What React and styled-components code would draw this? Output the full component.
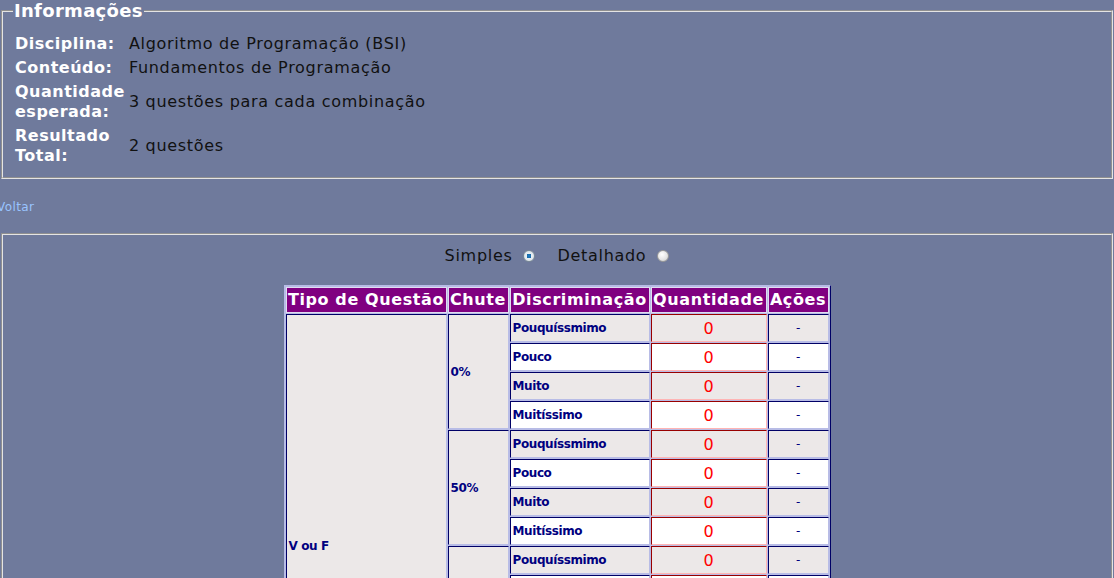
import React, { useState } from 'react';
import styled, { createGlobalStyle } from 'styled-components';

const GlobalStyle = createGlobalStyle`
  body {
    margin: 0;
    background-color: #6f7a9c;
    font-family: "DejaVu Sans", Verdana, sans-serif;
    color: #111;
  }
`;

const Fieldset = styled.fieldset`
  margin: 0 1px;
  border: 2px groove #e4e4e4;
  padding: ${props => props.$padding || '10px 9px 8px'};
  min-width: 0;
`;

const Legend = styled.legend`
  color: #fff;
  font-weight: bold;
  font-size: 18px;
  letter-spacing: 0.3px;
  padding: 0 1px;
  margin-left: 1px;
`;

const InfoTable = styled.table`
  border-collapse: separate;
  border-spacing: 2px;
  font-size: 16px;
`;

const InfoLabel = styled.th`
  color: #fff;
  font-weight: bold;
  text-align: left;
  letter-spacing: 0.5px;
  padding: 1px;
  line-height: 20px;
  width: 109px;
`;

const InfoValue = styled.td`
  padding: 1px;
  line-height: 20px;
  letter-spacing: 0.7px;
  color: #111;
`;

const BackLink = styled.a`
  display: block;
  color: #99c4ff;
  font-size: 12px;
  letter-spacing: 0.4px;
  text-decoration: none;
  margin: 21px 0 19px -3px;
  cursor: pointer;
`;

const ModeRow = styled.div`
  display: flex;
  justify-content: center;
  align-items: center;
  gap: 22px;
  font-size: 16px;
  letter-spacing: 0.7px;
  margin: 3px 0 20px;
`;

const ModeOption = styled.label`
  display: flex;
  align-items: center;
  gap: 11px;
  color: #111;
  cursor: pointer;
`;

const Radio = styled.input.attrs({ type: 'radio' })`
  appearance: none;
  width: 12px;
  height: 12px;
  margin: 0;
  border-radius: 50%;
  border: 1px solid #9a9a9a;
  background: radial-gradient(circle at 40% 35%, #ffffff 0%, #e6e6e6 55%, #c8c8c8 100%);

  &:checked {
    background: radial-gradient(circle at 50% 50%, #1d7fc6 0%, #1a6aa8 30%, #e8eef3 36%, #d6dde3 100%);
    border-color: #7a8a96;
  }
`;

const DataTable = styled.table`
  margin: 0 auto;
  border-collapse: separate;
  border-spacing: 1px;
  background-color: #b8bce6;
  border: 1px solid;
  border-color: #b8bce6 #000066 #000066 #b8bce6;
`;

const HeadCell = styled.th`
  background-color: #800080;
  color: #fff;
  font-size: 16px;
  font-weight: bold;
  letter-spacing: 0.6px;
  padding: 1px 1px 2px;
  border: 1px solid #e0dcf0;
  white-space: nowrap;
  height: 21px;
  width: ${props => props.$w}px;
`;

const Cell = styled.td`
  background-color: ${props => (props.$shade ? '#ece8e8' : '#ffffff')};
  border: 1px solid;
  border-color: ${props =>
    props.$red ? '#990000 #ffb4b4 #ffb4b4 #990000' : '#000066 #b8bce6 #b8bce6 #000066'};
  color: ${props => (props.$red ? '#ff0000' : '#000080')};
  font-size: ${props => (props.$red ? '16px' : '12px')};
  font-weight: ${props => (props.$bold ? 'bold' : 'normal')};
  letter-spacing: ${props => (props.$red ? '0' : '-0.4px')};
  text-align: ${props => (props.$center ? 'center' : 'left')};
  padding: 0 2px;
  height: 26px;
  white-space: nowrap;
`;

const GroupCell = styled(Cell)`
  background-color: #ece8e8;
  vertical-align: middle;
`;

const columns = [
  { label: 'Tipo de Questão', w: 157 },
  { label: 'Chute', w: 57 },
  { label: 'Discriminação', w: 136 },
  { label: 'Quantidade', w: 112 },
  { label: 'Ações', w: 57 },
];

const levels = ['Pouquíssmimo', 'Pouco', 'Muito', 'Muitíssimo'];
const guesses = ['0%', '50%', '75%', '100%'];

function App() {
  const [mode, setMode] = useState('simples');

  return (
    <>
      <GlobalStyle />
      <Fieldset>
        <Legend>Informações</Legend>
        <InfoTable>
          <tbody>
            <tr>
              <InfoLabel>Disciplina:</InfoLabel>
              <InfoValue>Algoritmo de Programação (BSI)</InfoValue>
            </tr>
            <tr>
              <InfoLabel>Conteúdo:</InfoLabel>
              <InfoValue>Fundamentos de Programação</InfoValue>
            </tr>
            <tr>
              <InfoLabel>Quantidade esperada:</InfoLabel>
              <InfoValue>3 questões para cada combinação</InfoValue>
            </tr>
            <tr>
              <InfoLabel>Resultado Total:</InfoLabel>
              <InfoValue>2 questões</InfoValue>
            </tr>
          </tbody>
        </InfoTable>
      </Fieldset>

      <BackLink>Voltar</BackLink>

      <Fieldset $padding="8px 0 0">
        <ModeRow>
          <ModeOption>
            Simples
            <Radio name="modo" checked={mode === 'simples'} onChange={() => setMode('simples')} />
          </ModeOption>
          <ModeOption>
            Detalhado
            <Radio name="modo" checked={mode === 'detalhado'} onChange={() => setMode('detalhado')} />
          </ModeOption>
        </ModeRow>

        <DataTable>
          <thead>
            <tr>
              {columns.map(col => (
                <HeadCell key={col.label} $w={col.w}>{col.label}</HeadCell>
              ))}
            </tr>
          </thead>
          <tbody>
            {guesses.map((guess, g) =>
              levels.map((level, i) => {
                const shade = i % 2 === 0;
                return (
                  <tr key={guess + level}>
                    {g === 0 && i === 0 && (
                      <GroupCell $bold rowSpan={guesses.length * levels.length}>
                        V ou F
                      </GroupCell>
                    )}
                    {i === 0 && (
                      <GroupCell $bold rowSpan={levels.length}>
                        {guess}
                      </GroupCell>
                    )}
                    <Cell $shade={shade} $bold>{level}</Cell>
                    <Cell $shade={shade} $red $center>0</Cell>
                    <Cell $shade={shade} $center>-</Cell>
                  </tr>
                );
              })
            )}
          </tbody>
        </DataTable>
      </Fieldset>
    </>
  );
}

export default App;
